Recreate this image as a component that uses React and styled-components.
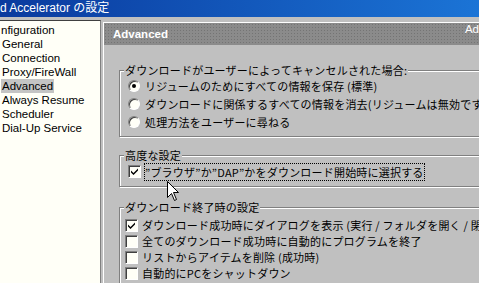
import styled, { createGlobalStyle } from "styled-components";

const GlobalStyle = createGlobalStyle`
  html, body {
    margin: 0;
    padding: 0;
    background: #c0c0c0;
    overflow: hidden;
  }
`;

const Window = styled.div`
  position: relative;
  width: 479px;
  height: 283px;
  overflow: hidden;
  background: #c0c0c0;
  font-family: "Noto Sans CJK JP", sans-serif;
  font-size: 11px;
  color: #000;
`;

const TitleBar = styled.div`
  height: 17px;
  line-height: 16px;
  background: linear-gradient(to right, #0a3a9e, #1b74d6);
  color: #fff;
  font-family: "Liberation Sans", "Noto Sans CJK JP", sans-serif;
  font-size: 12px;
  white-space: nowrap;
`;

const Main = styled.div`
  display: flex;
  padding-top: 3px;
  height: 263px;
`;

const Tree = styled.ul`
  list-style: none;
  margin: 0;
  padding: 2px 0 0;
  width: 100px;
  flex: none;
  background: #fffff7;
  border-top: 1px solid #404040;
  border-right: 1px solid #808080;
  font-family: "Liberation Sans", sans-serif;
  font-size: 11.5px;
  overflow: hidden;
`;

const TreeItem = styled.li`
  height: 14px;
  line-height: 14px;
  white-space: nowrap;
  padding-left: ${(p) => (p.$root ? "0" : "1px")};
  span {
    display: inline-block;
    padding: 0 1px;
    background: ${(p) => (p.$selected ? "#c4c4c4" : "transparent")};
  }
`;

const Panel = styled.div`
  flex: 1;
  min-width: 0;
  margin: 2px 0 0 2px;
  border-top: 1px solid #fff;
  border-left: 1px solid #fff;
  overflow: hidden;
`;

const Header = styled.div`
  display: flex;
  align-items: flex-start;
  height: 22px;
  background-color: #8b8b8b;
  background-image: radial-gradient(#747474 0.7px, transparent 0.9px);
  background-size: 3px 3px;
  color: #fff;
  font-family: "Liberation Sans", sans-serif;
  white-space: nowrap;
`;

const HeaderTitle = styled.span`
  padding-left: 9px;
  line-height: 22px;
  font-size: 11.5px;
  font-weight: bold;
`;

const HeaderTag = styled.span`
  margin-left: auto;
  padding-top: 1px;
  font-size: 11.5px;
  line-height: 11px;
`;

const Content = styled.div`
  padding: 18px 0 0 15px;
  display: flex;
  flex-direction: column;
`;

const Group = styled.fieldset`
  min-width: 0;
  margin: ${(p) => p.$gap || 0}px -40px 0 0;
  padding: ${(p) => p.$pt || 0}px 0 ${(p) => p.$pb || 0}px;
  border: 1px solid #808080;
  box-shadow: inset 1px 1px 0 #fff, 1px 1px 0 #fff;
`;

const Legend = styled.legend`
  margin-left: 4px;
  padding: 0 1px;
  height: 14px;
  line-height: 14px;
  background: #c0c0c0;
  letter-spacing: 0.2px;
`;

const Row = styled.label`
  display: flex;
  align-items: center;
  height: ${(p) => p.$h || 16}px;
  padding-left: ${(p) => p.$indent || 4}px;
  white-space: nowrap;
  letter-spacing: 0.2px;
`;

const Radio = styled.span`
  position: relative;
  flex: none;
  box-sizing: border-box;
  width: 12px;
  height: 12px;
  margin-right: 5px;
  border-radius: 50%;
  border: 1px solid;
  border-color: #808080 #fff #fff #808080;
  background: #fffff7;
  box-shadow: inset 1px 1px 0 #404040;
  &::after {
    content: "";
    display: ${(p) => (p.$checked ? "block" : "none")};
    position: absolute;
    left: 3px;
    top: 3px;
    width: 4px;
    height: 4px;
    border-radius: 50%;
    background: #000;
  }
`;

const Box = styled.span`
  display: flex;
  align-items: center;
  justify-content: center;
  flex: none;
  box-sizing: border-box;
  width: 13px;
  height: 13px;
  margin-right: ${(p) => p.$mr || 4}px;
  border: 1px solid;
  border-color: #808080 #fff #fff #808080;
  background: #fffff7;
  box-shadow: inset 1px 1px 0 #404040;
`;

const Focus = styled.span`
  padding: 1px 0;
  border: 1px dotted #000;
  line-height: 14px;
`;

const Cursor = styled.svg`
  position: absolute;
  left: 167px;
  top: 181px;
`;

const Check = () => (
  <svg width="9" height="9" viewBox="0 0 9 9">
    <path d="M1 3.5 L3.5 6 L8 1.5 L8 3.5 L3.5 8 L1 5.5 Z" fill="#000" />
  </svg>
);

const CheckBox = ({ checked, mr }) => <Box $mr={mr}>{checked && <Check />}</Box>;

export default function App() {
  return (
    <Window>
      <GlobalStyle />
      <TitleBar>d Accelerator の設定</TitleBar>
      <Main>
        <Tree>
          <TreeItem $root><span>nfiguration</span></TreeItem>
          <TreeItem><span>General</span></TreeItem>
          <TreeItem><span>Connection</span></TreeItem>
          <TreeItem><span>Proxy/FireWall</span></TreeItem>
          <TreeItem $selected><span>Advanced</span></TreeItem>
          <TreeItem><span>Always Resume</span></TreeItem>
          <TreeItem><span>Scheduler</span></TreeItem>
          <TreeItem><span>Dial-Up Service</span></TreeItem>
        </Tree>
        <Panel>
          <Header>
            <HeaderTitle>Advanced</HeaderTitle>
            <HeaderTag>Ad</HeaderTag>
          </Header>
          <Content>
            <Group $pb={5}>
              <Legend>ダウンロードがユーザーによってキャンセルされた場合:</Legend>
              <Row $h={18} $indent={8}>
                <Radio $checked />
                リジュームのためにすべての情報を保存 (標準)
              </Row>
              <Row $h={18} $indent={8}>
                <Radio />
                ダウンロードに関係するすべての情報を消去(リジュームは無効です)
              </Row>
              <Row $h={18} $indent={8}>
                <Radio />
                処理方法をユーザーに尋ねる
              </Row>
            </Group>
            <Group $gap={11} $pb={5}>
              <Legend>高度な設定</Legend>
              <Row $h={19} $indent={8}>
                <CheckBox checked mr={3} />
                <Focus>”ブラウザ”か”DAP”かをダウンロード開始時に選択する</Focus>
              </Row>
            </Group>
            <Group $gap={13} $pt={3} $pb={4}>
              <Legend>ダウンロード終了時の設定</Legend>
              <Row $indent={5}>
                <CheckBox checked />
                ダウンロード成功時にダイアログを表示 (実行 / フォルダを開く / 閉じる)
              </Row>
              <Row $indent={5}>
                <CheckBox />
                全てのダウンロード成功時に自動的にプログラムを終了
              </Row>
              <Row $indent={5}>
                <CheckBox />
                リストからアイテムを削除 (成功時)
              </Row>
              <Row $indent={5}>
                <CheckBox />
                自動的にPCをシャットダウン
              </Row>
            </Group>
          </Content>
        </Panel>
      </Main>
      <Cursor width="13" height="21" viewBox="0 0 13 21">
        <path
          d="M0.5 0.5 L0.5 16.5 L4.5 12.5 L7.5 19.5 L9.5 18.5 L6.5 11.5 L11.5 11.5 Z"
          fill="#fff"
          stroke="#000"
          strokeWidth="1"
        />
      </Cursor>
    </Window>
  );
}
